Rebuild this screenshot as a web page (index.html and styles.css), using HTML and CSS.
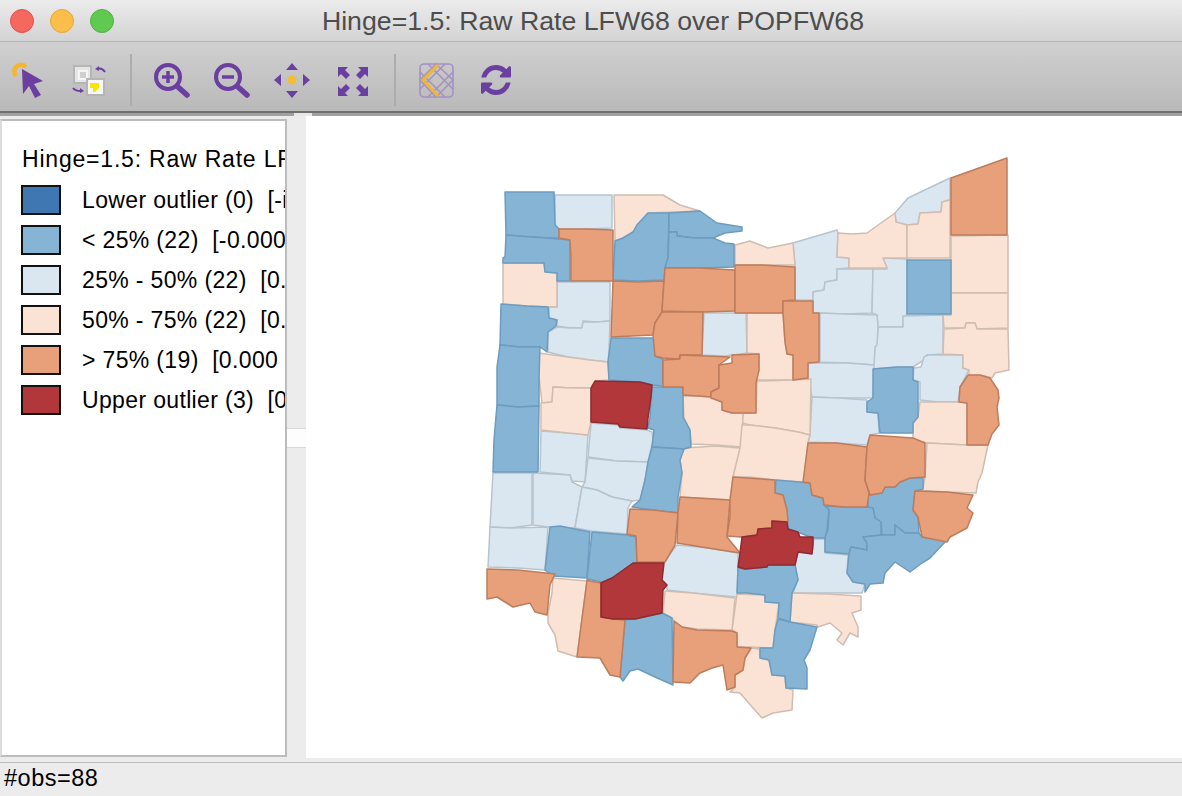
FILE: index.html
```html
<!DOCTYPE html>
<html lang="en">
<head>
<meta charset="utf-8">
<title>Hinge=1.5: Raw Rate LFW68 over POPFW68</title>
<link rel="stylesheet" href="styles.css">
</head>
<body>
<div class="window">
  <header class="titlebar">
    <div class="lights">
      <span class="light red"></span>
      <span class="light yellow"></span>
      <span class="light green"></span>
    </div>
    <div class="title">Hinge=1.5: Raw Rate LFW68 over POPFW68</div>
  </header>

  <nav class="toolbar">
    <div class="tools">
      <svg class="icon" viewBox="10 50 40 60"><path class="orange-line" d="M16 76a6.500 6.500 0 0 1 10-9"/><path class="purple" d="M22 69 43 81 34 84 41 95 35 98 29 86 23 94Z"/></svg>
      <svg class="icon" viewBox="70 50 40 60">
        <rect class="sq-a" x="74" y="66" width="17" height="17"/><rect class="sq-b" x="79" y="71" width="8" height="8"/>
        <rect class="sq-a2" x="87" y="79" width="17" height="16"/><path class="yellow" d="M90 83h9v5l-4 4h-2v-4h-3Z"/>
        <path class="purple-line thin" d="M105 72c-2-3-5-4-8-3"/><path class="purple" d="M95 69l4-3v5Z"/>
        <path class="purple-line thin" d="M73 88c2 3 5 3 8 3"/><path class="purple" d="M84 91l-4-3v5Z"/>
      </svg>
    </div>
    <div class="sep first"></div>
    <div class="tools">
      <svg class="icon" viewBox="150 50 40 60"><circle class="purple-line" cx="168" cy="77" r="12"/><path class="purple-line round" d="M162 77h12M168 71v12"/><path class="purple-line handle" d="M178 87 187 95"/></svg>
      <svg class="icon" viewBox="210 50 40 60"><circle class="purple-line" cx="228" cy="77" r="12"/><path class="purple-line round" d="M222 77h12"/><path class="purple-line handle" d="M238 87 247 95"/></svg>
      <svg class="icon" viewBox="270 50 40 60"><circle class="dot" cx="292" cy="80" r="4.5"/><path class="purple" d="M292 63l6 7h-12ZM292 98l6-7h-12ZM274 80l7-6v12ZM310 80l-7-6v12Z"/></svg>
      <svg class="icon wide" viewBox="330 50 44 60"><path class="purple" d="M338 67h10l-3 3 5 5-4 4-5-5-3 3ZM368 67v10l-3-3-5 5-4-4 5-5-3-3ZM338 96V86l3 3 5-5 4 4-5 5 3 3ZM368 96h-10l3-3-5-5 4-4 5 5 3-3Z"/></svg>
    </div>
    <div class="sep second"></div>
    <div class="tools">
      <svg class="icon" viewBox="416 50 40 60">
        <rect class="lattice" x="420" y="64" width="33" height="33" rx="4"/>
        <path class="lattice" d="M428 64 453 89M445 64 420 89M428 97 453 72M445 97 420 72M436 64 453 80 436 97 420 80Z"/>
        <path class="orange-soft" d="M438 65 423 80 438 96"/>
      </svg>
      <svg class="icon" viewBox="-256 -768 2048 3072"><path class="purple" d="M1511 928q0 5-1 7-64 268-268 434.5t-478 166.5q-146 0-282.5-55t-243.5-157l-129 129q-19 19-45 19t-45-19-19-45v-448q0-26 19-45t45-19h448q26 0 45 19t19 45-19 45l-137 137q71 66 161 102t187 36q134 0 250-65t186-179q11-17 53-117 8-23 30-23h192q13 0 22.5 9.5t9.5 22.5zm25-800v448q0 26-19 45t-45 19h-448q-26 0-45-19t-19-45 19-45l138-138q-148-137-349-137-134 0-250 65t-186 179q-11 17-53 117-8 23-30 23h-199q-13 0-22.5-9.5t-9.5-22.5v-7q65-268 270-434.5t480-166.5q146 0 284 55.5t245 156.5l130-129q19-19 45-19t45 19 19 45z"/></svg>
    </div>
  </nav>

  <div class="band"><span class="band-light"></span></div>

  <main class="content">
    <aside class="legend">
      <div class="legend-title">Hinge=1.5: Raw Rate LFW68 over POPFW68</div>
      <div class="legend-row"><span class="swatch s1"></span><span class="label">Lower outlier (0)  [-inf : -0.000]</span></div>
      <div class="legend-row"><span class="swatch s2"></span><span class="label">&lt; 25% (22)  [-0.000 : 0.000]</span></div>
      <div class="legend-row"><span class="swatch s3"></span><span class="label">25% - 50% (22)  [0.000 : 0.000]</span></div>
      <div class="legend-row"><span class="swatch s4"></span><span class="label">50% - 75% (22)  [0.000 : 0.000]</span></div>
      <div class="legend-row"><span class="swatch s5"></span><span class="label">&gt; 75% (19)  [0.000 : 0.001]</span></div>
      <div class="legend-row"><span class="swatch s6"></span><span class="label">Upper outlier (3)  [0.001 : inf]</span></div>
    </aside>
    <div class="sash"><span class="grip"></span></div>
    <section class="map">
      <svg class="map-svg" viewBox="306 116 876 642">
        <g class="c3">
          <polygon points="555,195 612,195 612,228 587,229 559,229 555,225"/>
          <polygon points="557,282 610,282 610,321 597,322 583,321 582,328 570,328 557,326 557,320 549,318 549,307 557,307"/>
          <polygon points="557,327 570,328 582,328 583,322 597,322 610,321 609,350 608,362 590,360 568,357 548,352 548,332"/>
          <polygon points="704,313 746,313 747,353 725,356 702,355"/>
          <polygon points="793,243 837,230 838,233 837,257 849,258 849,268 837,269 837,280 825,282 824,290 813,292 813,300 795,300 795,265"/>
          <polygon points="837,269 873,269 872,313 845,314 813,313 813,292 824,290 825,282 837,280"/>
          <polygon points="873,269 887,269 883,258 907,259 907,315 903,317 903,327 878,327 877,315 872,313"/>
          <polygon points="895,213 908,198 950,178 950,200 942,202 941,212 920,213 918,224 907,225 896,222"/>
          <polygon points="878,327 903,327 903,316 943,315 943,354 927,355 924,360 913,367 897,367 885,368 873,369 875,347 877,343"/>
          <polygon points="820,313 845,314 877,315 878,327 877,345 875,347 874,365 847,363 820,362"/>
          <polygon points="924,357 928,355 963,355 963,368 969,370 960,387 958,402 938,402 920,400 920,382 913,380 914,368 921,367"/>
          <polygon points="808,363 847,363 874,365 873,398 838,398 812,397 808,380"/>
          <polygon points="812,397 838,398 867,400 867,412 878,413 879,433 870,435 867,445 837,443 808,442 810,435"/>
          <polygon points="541,431 568,433 588,435 585,482 572,481 570,475 540,472"/>
          <polygon points="591,423 618,425 620,428 647,430 652,432 653,440 648,462 617,461 588,457"/>
          <polygon points="588,458 617,461 648,462 645,480 640,500 632,501 612,497 597,490 582,487 585,482"/>
          <polygon points="490,527 493,473 532,473 532,525 510,528"/>
          <polygon points="533,473 570,475 572,482 582,487 575,528 548,527 533,525"/>
          <polygon points="582,487 597,490 612,497 632,501 628,508 627,534 592,531 575,528"/>
          <polygon points="490,527 510,528 548,527 545,570 518,568 488,567"/>
          <polygon points="814,539 825,539 825,553 848,555 847,573 853,582 865,584 862,593 828,593 793,593 798,580 795,565 798,552 812,553 813,545"/>
          <polygon points="677,545 708,548 738,553 738,567 737,597 693,593 667,590 667,585 662,580 663,563"/>
        </g>
        <g class="c4">
          <polygon points="614,195 663,195 680,205 700,211 648,213 637,225 633,232 623,238 615,241"/>
          <polygon points="503,263 523,263 544,263 545,272 557,273 557,307 527,306 503,304"/>
          <polygon points="735,245 750,241 768,248 793,243 795,265 763,265 735,265"/>
          <polygon points="747,313 783,313 785,342 787,354 793,355 793,380 756,380 759,370 759,354 747,353"/>
          <polygon points="757,381 793,380 811,379 810,435 798,432 775,428 750,425 742,423 743,413 756,413"/>
          <polygon points="683,396 698,396 711,397 722,402 722,410 732,413 743,413 742,447 716,445 691,444 690,430 684,418"/>
          <polygon points="539,353 568,357 590,360 608,362 609,380 595,381 591,388 572,388 553,387 552,402 542,403 539,377"/>
          <polygon points="553,387 572,388 591,388 591,422 588,435 568,433 541,430 541,403 552,402"/>
          <polygon points="684,448 716,446 740,448 738,460 733,477 730,500 716,499 680,497 682,473 680,460"/>
          <polygon points="742,425 750,425 775,428 798,432 810,435 808,442 804,482 775,480 750,477 733,477 740,448"/>
          <polygon points="838,233 852,234 867,233 895,213 896,222 907,225 907,258 883,258 887,268 849,268 849,258 837,257"/>
          <polygon points="907,225 918,224 920,213 941,212 942,202 950,200 950,258 907,258"/>
          <polygon points="951,236 1008,235 1008,293 951,293"/>
          <polygon points="951,293 1008,293 1008,328 977,329 975,323 966,323 965,328 944,328 943,315 951,315"/>
          <polygon points="944,329 965,328 966,323 975,323 977,329 1008,329 1009,370 995,373 992,378 985,376 969,375 969,370 963,368 963,355 943,354"/>
          <polygon points="920,402 938,402 958,402 967,403 967,445 927,443 913,440 913,423 918,417"/>
          <polygon points="927,443 967,445 988,445 982,473 978,482 976,493 947,492 915,490 923,488 925,477"/>
          <polygon points="792,593 828,594 861,596 861,610 852,613 858,627 858,637 850,633 843,645 837,640 842,633 830,623 818,627 817,625 790,622"/>
          <polygon points="737,594 765,595 765,602 779,603 775,630 773,648 750,647 737,647 737,633 732,630"/>
          <polygon points="751,648 760,649 760,658 769,660 772,675 785,676 786,688 793,690 792,710 773,713 762,718 753,708 740,693 730,692 735,687 735,675 743,670 745,658"/>
          <polygon points="553,578 587,581 577,657 558,651 555,635 548,623 548,613 552,593"/>
          <polygon points="665,591 693,593 735,598 732,630 697,629 682,627 674,621 672,618 663,613"/>
        </g>
        <g class="c2">
          <polygon points="505,192 554,192 555,225 559,229 559,238 547,238 518,236 506,235"/>
          <polygon points="506,235 518,236 547,238 570,240 570,281 557,281 557,273 545,272 544,263 523,263 503,263 503,258 505,257"/>
          <polygon points="615,241 623,238 633,232 637,225 648,213 669,213 668,258 665,268 664,280 637,281 613,280"/>
          <polygon points="669,213 700,211 717,223 742,227 742,231 725,233 713,238 695,238 677,236 677,232 669,232"/>
          <polygon points="669,232 677,232 677,236 695,238 713,238 725,243 734,244 734,267 700,268 665,268 668,258"/>
          <polygon points="501,304 527,306 548,307 549,318 557,320 556,326 548,332 547,352 540,347 520,347 500,345"/>
          <polygon points="611,338 654,338 655,356 663,359 663,386 652,385 640,382 609,380 608,362"/>
          <polygon points="652,387 683,387 683,417 690,430 691,447 684,449 652,447 654,430 648,428 650,417"/>
          <polygon points="500,345 520,347 540,347 539,377 539,406 518,407 497,405 497,367"/>
          <polygon points="497,405 518,407 539,406 538,472 493,472 494,440"/>
          <polygon points="907,260 951,260 951,314 907,314"/>
          <polygon points="873,369 885,368 897,367 913,367 913,380 918,382 918,417 913,423 913,433 880,433 878,413 867,412 867,402 873,398"/>
          <polygon points="652,447 684,449 680,460 682,473 678,497 678,513 653,510 632,507 640,500 645,480 648,462"/>
          <polygon points="868,495 882,493 885,487 895,487 900,482 910,478 923,478 923,489 915,491 913,510 918,517 919,533 905,533 895,525 895,535 882,535 881,522 875,518 873,508 868,507"/>
          <polygon points="825,506 845,507 868,507 873,508 875,518 881,522 881,535 863,537 867,543 867,550 851,547 849,554 825,552 825,537 828,530 829,510"/>
          <polygon points="776,480 810,483 812,495 823,498 824,505 829,510 827,530 825,538 813,538 800,533 788,530 787,510 783,495 775,493"/>
          <polygon points="851,547 867,550 867,543 863,537 882,535 895,535 895,525 905,533 919,533 922,537 947,540 930,558 922,563 910,572 895,562 885,573 883,583 870,584 865,592 865,584 853,582 847,573 849,554"/>
          <polygon points="738,568 745,569 767,567 768,565 795,565 798,580 792,593 790,622 778,618 779,603 765,602 765,595 747,593 737,593"/>
          <polygon points="778,619 790,622 817,627 813,640 810,650 804,660 807,668 807,689 786,688 785,676 772,675 769,660 760,658 760,648 773,648 775,630"/>
          <polygon points="625,620 635,619 662,613 672,618 673,685 655,677 638,669 630,671 623,681 620,677"/>
          <polygon points="550,527 560,526 590,532 587,578 553,576 545,570"/>
          <polygon points="592,532 627,535 636,537 637,562 612,578 602,582 587,579"/>
        </g>
        <g class="c5">
          <polygon points="559,229 587,229 613,230 613,281 571,281 571,258 570,240 559,238"/>
          <polygon points="613,281 638,282 664,281 662,312 655,323 653,335 611,337"/>
          <polygon points="665,268 700,268 735,270 735,311 703,312 662,311"/>
          <polygon points="735,265 763,265 795,267 795,300 783,301 783,313 735,313"/>
          <polygon points="662,312 703,312 702,355 680,355 679,359 663,358 655,356 653,335 655,323"/>
          <polygon points="663,360 680,359 680,355 730,357 719,365 719,388 711,392 711,397 698,396 683,395 683,387 663,387"/>
          <polygon points="732,355 759,354 759,370 756,383 756,413 732,413 722,410 722,402 711,398 711,392 719,388 719,365 732,363"/>
          <polygon points="783,301 813,301 813,313 819,313 819,362 808,363 808,378 793,380 793,355 787,354 785,342 783,313"/>
          <polygon points="808,443 837,443 867,447 865,480 869,493 867,507 845,507 824,505 823,498 812,495 810,483 803,482"/>
          <polygon points="870,435 913,438 925,443 925,477 910,478 900,482 895,487 885,487 882,493 870,495 865,480 867,447"/>
          <polygon points="951,178 1007,158 1007,235 951,235"/>
          <polygon points="968,375 980,375 990,378 998,390 999,398 997,407 999,425 992,434 988,445 967,445 967,403 959,402 960,387"/>
          <polygon points="915,491 947,492 973,495 967,508 973,513 967,528 950,537 947,542 922,537 918,517 913,510"/>
          <polygon points="674,621 682,627 697,630 732,631 737,633 737,647 751,648 745,658 743,670 735,675 735,687 727,690 723,665 712,668 700,673 690,683 673,682"/>
          <polygon points="590,581 601,583 601,617 613,619 625,620 620,677 610,675 600,658 577,657 587,580"/>
          <polygon points="487,569 518,570 555,574 550,585 547,615 535,612 530,603 513,607 497,597 487,599"/>
          <polygon points="630,509 653,510 678,513 675,545 665,562 637,562 636,536 627,534"/>
          <polygon points="680,497 730,500 727,537 740,553 708,548 677,543 678,513"/>
          <polygon points="733,477 775,480 775,493 783,495 787,510 788,522 772,521 772,528 758,529 757,535 742,537 727,536 730,517 730,500"/>
        </g>
        <g class="c6">
          <polygon points="595,381 640,382 652,385 651,397 648,418 647,429 620,427 618,424 591,422 591,388"/>
          <polygon points="601,583 612,578 633,563 664,563 662,580 667,585 663,590 662,613 635,619 613,619 601,617"/>
          <polygon points="742,537 757,535 758,529 772,528 772,521 787,522 788,529 798,532 800,537 813,537 813,545 812,554 798,552 795,565 768,565 767,567 745,569 738,567 740,553"/>
        </g>
      </svg>
    </section>
  </main>

  <footer class="status">#obs=88</footer>
</div>
</body>
</html>
```

FILE: styles.css
```css
* { box-sizing: border-box; }
html, body { margin: 0; padding: 0; }
body { font-family: "Liberation Sans", Arial, sans-serif; background: #ececec; overflow: hidden; }

.window { width: 1182px; height: 796px; display: flex; flex-direction: column; }

.titlebar {
  height: 42px;
  display: flex;
  align-items: center;
  background: linear-gradient(#ececec, #d3d3d3);
  border-bottom: 1px solid #b3b3b3;
}
.lights { display: flex; gap: 16px; padding-left: 10px; }
.light { width: 24px; height: 24px; border-radius: 50%; }
.red { background: #f4685f; border: 1px solid #e25147; }
.yellow { background: #fbbe4a; border: 1px solid #e5a63a; }
.green { background: #5fc950; border: 1px solid #4fb141; }
.title {
  flex: 1;
  text-align: center;
  font-size: 26.7px;
  line-height: 42px;
  color: #4d4d4d;
  margin-left: -116px;
  padding-left: 6px;
}

.toolbar {
  height: 69px;
  display: flex;
  padding-left: 10px;
  background: linear-gradient(#d0d0d0, #b9b9b9);
}
.tools { display: flex; gap: 20px; margin-top: 8px; }
.icon { width: 40px; height: 60px; display: block; filter: blur(0.6px); }
.icon.wide { width: 44px; }
.sep { width: 2px; height: 52px; margin-top: 12px; background: #adadad; }
.sep.first { margin-left: 20px; margin-right: 18px; }
.sep.second { margin-left: 20px; margin-right: 20px; }

.purple { fill: #6b3fa0; }
.purple-line { fill: none; stroke: #6b3fa0; stroke-width: 4; }
.purple-line.round { stroke-width: 3.5; }
.purple-line.handle { stroke-width: 5.5; stroke-linecap: round; }
.purple-line.thin { stroke-width: 2; }
.orange-line { fill: none; stroke: #f2b632; stroke-width: 4.5; }
.orange-soft { fill: none; stroke: #f2b632; stroke-width: 3; }
.yellow { fill: #f7e600; }
.dot { fill: #f4bd33; }
.sq-a { fill: #e6e6e6; stroke: #b5b5b5; stroke-width: 2; }
.sq-b { fill: #cfcfcf; stroke: #f5f5f5; stroke-width: 2; }
.sq-a2 { fill: #f6f6f6; stroke: #b5b5b5; stroke-width: 2; }
.lattice { fill: none; stroke: #a491c6; stroke-width: 1.6; }

.band {
  height: 5px;
  background: #a0a0a0;
  border-top: 2px solid #6f6f6f;
  padding-left: 294px;
}
.band-light { display: block; width: 18px; height: 3px; background: #e8e8e8; }

.content { height: 646px; display: flex; padding-bottom: 4px; background: #ececec; }

.legend {
  width: 287px;
  flex: none;
  margin-top: 3px;
  margin-bottom: 1px;
  background: #fff;
  border: 2px solid #bcbcbc;
  border-left-color: #dcdcdc;
  overflow: hidden;
  padding: 24px 0 0 19px;
  font-size: 23px;
  letter-spacing: 0.35px;
  color: #000;
}
.legend-title { height: 40px; line-height: 28px; padding-left: 1px; white-space: pre; letter-spacing: 0.8px; }
.legend-row { height: 40px; display: flex; gap: 21px; }
.label { line-height: 30px; white-space: pre; }
.swatch { flex: none; width: 40px; height: 30px; border: 2px solid #111; }
.s1 { background: #3f77b2; }
.s2 { background: #85b4d5; }
.s3 { background: #dae7f1; }
.s4 { background: #fae2d4; }
.s5 { background: #e7a07a; }
.s6 { background: #b2373b; }

.sash { width: 19px; flex: none; padding-top: 312px; }
.grip { display: block; height: 20px; background: #fdfdfd; border-top: 1px solid #d8d8d8; border-bottom: 1px solid #d8d8d8; }

.map { flex: 1; background: #fff; }
.map-svg { display: block; width: 876px; height: 642px; filter: blur(0.3px); }
.map-svg polygon { stroke-width: 1.5; stroke-linejoin: round; }
.c2 polygon { fill: #85b4d5; stroke: #6c9cc0; }
.c3 polygon { fill: #dae7f1; stroke: #b7c4ce; }
.c4 polygon { fill: #fae2d4; stroke: #d0bdb1; }
.c5 polygon { fill: #e7a07a; stroke: #bd7c5c; }
.c6 polygon { fill: #b2373b; stroke: #8f2a2f; }

.status {
  flex: 1;
  border-top: 1px solid #bdbdbd;
  padding: 0 0 0 4px;
  font-size: 23.5px;
  letter-spacing: 0.5px;
  line-height: 31px;
  color: #000;
  background: #ececec;
}
```
